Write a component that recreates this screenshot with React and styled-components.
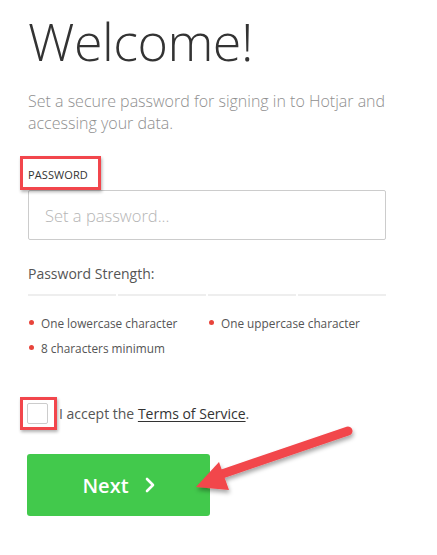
import React from "react";
import styled, { createGlobalStyle } from "styled-components";

const Global = createGlobalStyle`
  body {
    margin: 0;
    background: #fff;
    font-family: "Open Sans", "Liberation Sans", sans-serif;
  }
`;

const Page = styled.div`
  position: relative;
  width: 437px;
  height: 555px;
  padding: 0 51px 0 28px;
  box-sizing: border-box;
  overflow: hidden;
`;

const Title = styled.h1`
  margin: 0;
  padding-top: 5px;
  font-size: 52px;
  font-weight: 300;
  color: #333;
  line-height: 72px;
  letter-spacing: -0.5px;
`;

const Intro = styled.p`
  margin: 13px 0 0;
  font-size: 16px;
  font-weight: 300;
  line-height: 22px;
  color: #8f8f8f;
`;

const Marked = styled.span`
  position: relative;
  display: inline-block;
  &::after {
    content: "";
    position: absolute;
    left: ${(p) => p.$l}px;
    right: ${(p) => p.$r}px;
    top: ${(p) => p.$t}px;
    bottom: ${(p) => p.$b}px;
    border: 3px solid #f2464c;
    box-shadow: 1px 2px 3px rgba(0, 0, 0, 0.3);
  }
`;

const Label = styled.label`
  display: block;
  margin-top: 33px;
  font-size: 11px;
  line-height: 16px;
  color: #333;
  letter-spacing: 0.1px;
`;

const Input = styled.input`
  display: block;
  width: 100%;
  height: 50px;
  margin-top: 7px;
  box-sizing: border-box;
  border: 1px solid #ccc;
  border-radius: 2px;
  padding: 0 16px;
  font-family: inherit;
  font-size: 16.5px;
  font-weight: 300;
  color: #333;
  &::placeholder {
    color: #b5b5b5;
  }
`;

const StrengthTitle = styled.div`
  margin-top: 24px;
  font-size: 14px;
  line-height: 20px;
  color: #555;
`;

const Bars = styled.div`
  display: grid;
  grid-template-columns: repeat(4, 1fr);
  gap: 2px;
  margin-top: 10px;
`;

const Bar = styled.div`
  height: 2px;
  background: #eee;
`;

const Rules = styled.ul`
  display: grid;
  grid-template-columns: 180px 1fr;
  row-gap: 5px;
  list-style: none;
  margin: 17px 0 0;
  padding: 0;
`;

const Rule = styled.li`
  display: flex;
  align-items: center;
  gap: 7px;
  font-size: 11.8px;
  line-height: 20px;
  color: #555;
  &::before {
    content: "";
    width: 5px;
    height: 5px;
    border-radius: 50%;
    background: #e8443b;
    margin-left: 1px;
    margin-bottom: 2px;
  }
`;

const Accept = styled.div`
  display: flex;
  align-items: center;
  gap: 11px;
  margin-top: 45px;
  margin-left: -1px;
  font-size: 14px;
  color: #555;
`;

const Box = styled.span`
  display: block;
  width: 21px;
  height: 21px;
  box-sizing: border-box;
  border: 1px solid #ccc;
  border-radius: 2px;
  background: #fff;
`;

const Terms = styled.a`
  color: #333;
  text-decoration: underline;
  text-underline-offset: 2px;
`;

const Next = styled.button`
  display: flex;
  align-items: center;
  justify-content: center;
  gap: 16px;
  width: 183px;
  height: 62px;
  margin-top: 30px;
  margin-left: -1px;
  border: none;
  border-radius: 3px;
  background: #42c94c;
  color: #fff;
  font-family: inherit;
  font-size: 20px;
  font-weight: 600;
  padding: 0;
`;

const Arrow = styled.svg`
  position: absolute;
  left: 0;
  top: 0;
  pointer-events: none;
`;

export default function App() {
  return (
    <Page>
      <Global />
      <Title>Welcome!</Title>
      <Intro>Set a secure password for signing in to Hotjar and accessing your data.</Intro>
      <Label>
        <Marked $l={-8} $r={-13} $t={-11} $b={-7}>PASSWORD</Marked>
      </Label>
      <Input type="password" placeholder="Set a password..." />
      <StrengthTitle>Password Strength:</StrengthTitle>
      <Bars>
        <Bar />
        <Bar />
        <Bar />
        <Bar />
      </Bars>
      <Rules>
        <Rule>One lowercase character</Rule>
        <Rule>One uppercase character</Rule>
        <Rule>8 characters minimum</Rule>
      </Rules>
      <Accept>
        <Marked $l={-7} $r={-9} $t={-6} $b={-6}>
          <Box />
        </Marked>
        <span>
          I accept the <Terms>Terms of Service</Terms>.
        </span>
      </Accept>
      <Next>
        Next
        <svg width="10" height="16" viewBox="0 0 10 16">
          <path d="M2 2l6 6-6 6" fill="none" stroke="#fff" strokeWidth="2.6" strokeLinecap="round" strokeLinejoin="round" />
        </svg>
      </Next>
      <Arrow width="437" height="555" viewBox="0 0 437 555">
        <defs>
          <filter id="sh" x="-20%" y="-20%" width="140%" height="160%">
            <feDropShadow dx="1" dy="3" stdDeviation="2" floodColor="#000" floodOpacity="0.35" />
          </filter>
        </defs>
        <g filter="url(#sh)">
          <line x1="348" y1="431" x2="222" y2="474" stroke="#f2464c" strokeWidth="9" strokeLinecap="round" />
          <polygon points="196,487 219,462 229,490" fill="#f2464c" />
        </g>
      </Arrow>
    </Page>
  );
}
